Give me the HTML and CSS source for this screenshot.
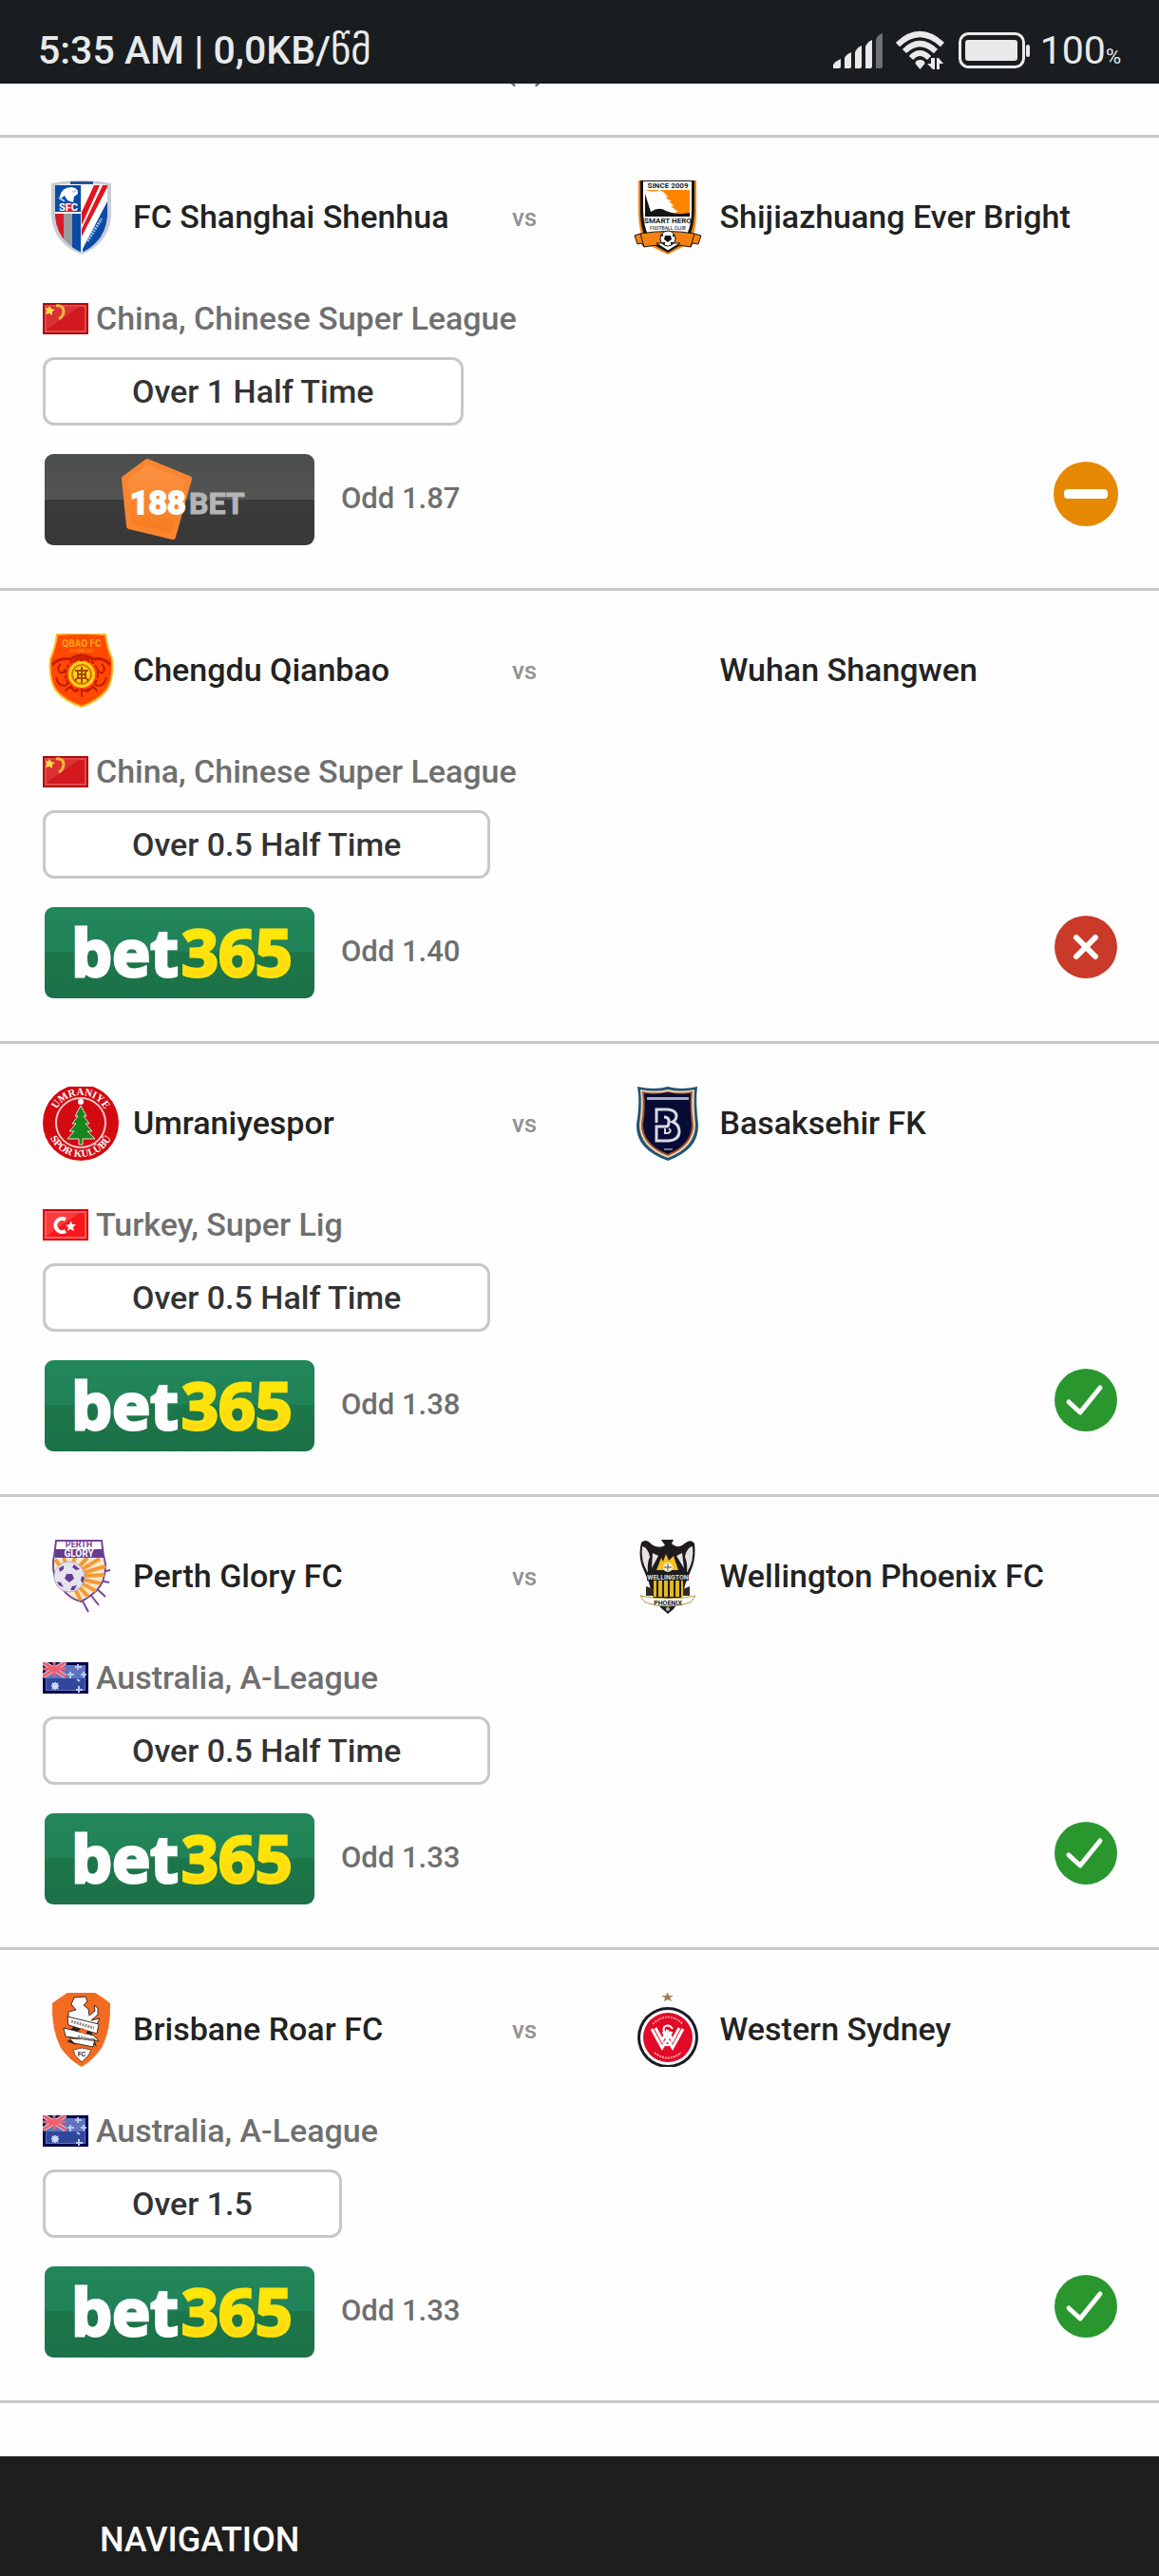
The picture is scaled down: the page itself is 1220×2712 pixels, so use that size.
FILE: index.html
```
<!DOCTYPE html>
<html lang="en">
  <head>
    <meta charset="utf-8">
    <meta name="viewport" content="width=device-width, initial-scale=1">
    <title>Tips</title>
    <link rel="stylesheet" href="styles.css">
  </head>
  <body>

<!-- shared pictures -->
<svg class="sprite" aria-hidden="true">
  <defs>
    <linearGradient id="g-green" x1="0" y1="0" x2="0" y2="1">
      <stop offset="0" stop-color="#22875b"/><stop offset="0.49" stop-color="#218257"/>
      <stop offset="0.49" stop-color="#1c774a"/><stop offset="1" stop-color="#1d7148"/>
    </linearGradient>
    <linearGradient id="g-yellow" x1="0" y1="0" x2="0" y2="1">
      <stop offset="0" stop-color="#fff200"/><stop offset="1" stop-color="#ffd016"/>
    </linearGradient>
    <linearGradient id="g-dark" x1="0" y1="0" x2="0" y2="1">
      <stop offset="0" stop-color="#4c4e4d"/><stop offset="0.5" stop-color="#545454"/>
      <stop offset="0.5" stop-color="#3b3b3b"/><stop offset="1" stop-color="#383838"/>
    </linearGradient>
    <linearGradient id="g-orange" x1="0" y1="0" x2="0" y2="1">
      <stop offset="0" stop-color="#fb9445"/><stop offset="1" stop-color="#f87a1c"/>
    </linearGradient>

    <symbol id="bet365" viewBox="0 0 288 96">
      <rect x="2" width="284" height="96" rx="9" fill="url(#g-green)"/>
      <text class="logo-bet" x="30" y="73" fill="#fff" stroke="#fff">bet</text>
      <text class="logo-bet" x="146" y="73" fill="url(#g-yellow)" stroke="#ffe30c">365</text>
    </symbol>
    <symbol id="bet188" viewBox="0 0 288 96">
      <rect x="2" width="284" height="96" rx="9" fill="url(#g-dark)"/>
      <path d="M86 26L110 8L154 26L137 87L91 76Z" fill="url(#g-orange)" stroke="#fa8530" stroke-width="6" stroke-linejoin="round"/>
      <text class="logo-188" x="92" y="63" fill="#fff" stroke="#fff">188</text>
      <text class="logo-188 logo-188-bet" x="154" y="63" fill="#b5b5b5" stroke="#b5b5b5">BET</text>
    </symbol>

    <symbol id="flag-cn" viewBox="0 0 48 33">
      <rect width="48" height="33" fill="#ad0a0c"/>
      <rect x="2" y="2" width="44" height="29" fill="#e24a4c"/>
      <rect x="4" y="4" width="40" height="25" fill="#d3191d"/>
      <path d="M3 3H40L4 28Z" fill="#e04044" opacity=".6"/>
      <path d="M7 3l2 3 4 1-3 2 0 4-3-2-4 1 1-4-1-3 3 0z" fill="#fbdc4a"/>
      <path d="M14 3q7-1 8 5q0 6-5 9M18 2v2" fill="none" stroke="#eeb838" stroke-width="3"/>
    </symbol>
    <symbol id="flag-tr" viewBox="0 0 48 33">
      <rect width="48" height="33" fill="#dc0003"/>
      <rect x="2" y="2" width="44" height="29" fill="#fd6264"/>
      <rect x="4" y="4" width="40" height="25" fill="#f7181b"/>
      <path d="M3 3H40L4 28Z" fill="#fd5457" opacity=".6"/>
      <path d="M24 11a7 7 0 1 0 0 12" fill="none" stroke="#fff" stroke-width="4"/>
      <path d="M30 12l1 4 4 0-3 3 1 4-4-2-3 2 1-4-3-2 4-1z" fill="#fff"/>
    </symbol>
    <symbol id="flag-au" viewBox="0 0 48 33">
      <rect width="48" height="33" fill="#03044b"/>
      <rect x="3" y="3" width="42" height="27" fill="#5f74bd"/>
      <rect x="4" y="17" width="40" height="12" fill="#31479b"/>
      <path d="M0 0L24 15M24 0L0 15" stroke="#dfc9e0" stroke-width="5"/>
      <path d="M0 0L24 15M24 0L0 15M0 7H24M12 0V15" stroke="#ee5f6b" stroke-width="3"/>
      <path d="M13 21v8M9 25h8M29 10v7M26 13h7M37 2v6M34 5h7M43 10v6M40 13h6M38 25v7M35 29h7M36 18l3 2" stroke="#b9c8f2" stroke-width="2"/>
      <path d="M10 22l6 6M16 22l-6 6" stroke="#cfdcff" stroke-width="2"/>
    </symbol>

    <symbol id="res-win" viewBox="0 0 68 68">
      <circle cx="34" cy="34" r="33" fill="#29972d"/>
      <path d="M16 36L28 47L49 21" fill="none" stroke="#fff" stroke-width="5" stroke-linecap="round" stroke-linejoin="round"/>
    </symbol>
    <symbol id="res-lose" viewBox="0 0 68 68">
      <circle cx="34" cy="34" r="33" fill="#c93a28"/>
      <path d="M24 24L44 44M44 24L24 44" stroke="#fff" stroke-width="6" stroke-linecap="round"/>
    </symbol>
    <symbol id="res-void" viewBox="0 0 68 68">
      <circle cx="34" cy="34" r="34" fill="#e68900"/>
      <rect x="11" y="29" width="46" height="10" rx="4" fill="#fff"/>
    </symbol>
  </defs>
</svg>

<header class="status-bar">
  <div class="status-left">5:35 AM | 0,0KB/წმ</div>
  <div class="status-right">
    <svg class="ic-signal" viewBox="0 0 52 40" aria-label="signal">
      <g fill="#e8eaea">
        <path d="M0 39V35Q3 31 8 29V37Q8 39 6 39Z"/>
        <path d="M12 39V28Q14 24 19 22V37Q19 39 17 39Z"/>
        <path d="M23 39V22Q25 17 30 15V37Q30 39 28 39Z"/>
        <path d="M34 39V16Q36 11 41 9V37Q41 39 39 39Z"/>
      </g>
      <path d="M45 39V9Q46 4 52 2V37Q52 39 50 39Z" fill="#6d7072"/>
    </svg>
    <svg class="ic-wifi" viewBox="0 0 52 42" aria-label="wifi">
      <g fill="none" stroke="#e8eaea" stroke-width="6">
        <path d="M2 15Q25 -7 49 15"/>
        <path d="M9 22Q25 6 42 22"/>
        <path d="M16 29Q25 19 35 29"/>
      </g>
      <path d="M25.500 31q5 0 5 4l-5 6-5-6q0-4 5-4z" fill="#e8eaea"/>
      <path d="M33 35h4v-6h4v12h-2zM43 29h2l5 6h-4v6h-3z" fill="#e8eaea"/>
    </svg>
    <svg class="ic-battery" viewBox="0 0 76 40" aria-label="battery">
      <rect x="1.500" y="2.500" width="67" height="35" rx="9" fill="none" stroke="#e8eaea" stroke-width="3"/>
      <rect x="7" y="9" width="55" height="22" rx="3" fill="#e8eaea"/>
      <rect x="71" y="14" width="4" height="13" rx="2" fill="#e8eaea"/>
    </svg>
    <span class="battery-text">100<small>%</small></span>
  </div>
</header>

<main>
  <!-- heading scrolled under the status bar -->
  <div class="scrolled"><span class="scrolled-count">(5)</span></div>

  <article class="tip">
    <div class="teams">
      <div class="team">
        <svg class="crest" viewBox="0 0 80 78">
          <clipPath id="c-sh"><path d="M13 5Q41 1 68 5V38Q66 64 41 76Q15 64 13 38Z"/></clipPath>
          <path d="M9 3L22 1L41 0L60 1L72 3V38Q70 66 41 78Q11 66 9 38Z" fill="#c9cdd6"/>
          <g clip-path="url(#c-sh)">
            <rect width="80" height="78" fill="#fff"/>
            <rect x="12" y="5" width="28" height="28" fill="#0a4ca5"/>
            <rect x="12" y="35" width="10" height="43" fill="#d51b25"/>
            <rect x="22" y="35" width="9" height="43" fill="#999b9e"/>
            <rect x="31" y="35" width="9" height="43" fill="#0a4ca5"/>
            <path d="M41 33L54 5H60L41 47ZM41 51L63 5H69L41 59Z" fill="#e3141d"/>
            <path d="M69 20V78H42V72Z" fill="#0a4ca5"/>
            <path d="M47 64L62 40" stroke="#9cbce6" stroke-width="3" stroke-dasharray="2 1"/>
            <path d="M18 17Q20 7 30 7Q38 8 37 14L33 17L32 23L26 21L23 16L19 19Z" fill="#fff"/>
            <path d="M17 18L23 22M31 12L35 11" stroke="#b4cef0" stroke-width="2"/>
            <rect x="23" y="24" width="9" height="9" fill="#df1c26"/>
            <rect x="40" y="4" width="1" height="74" fill="#dfe6ef"/>
          </g>
          <rect x="29" y="1" width="24" height="3" fill="#23529e"/>
          <text class="crest-text" x="27" y="32" font-size="11" fill="#fff">SFC</text>
        </svg>
        <span class="team-name">FC Shanghai Shenhua</span>
      </div>
      <span class="vs">vs</span>
      <div class="team">
        <svg class="crest" viewBox="0 0 80 78">
          <path d="M10 0H71V32Q71 61 60 68L41 78L21 68Q10 60 10 32Z" fill="#f58112"/>
          <path d="M12 0H69V32Q68 58 58 66L41 76L23 66Q12 58 12 32Z" fill="#151515"/>
          <path d="M15 1H66V32Q65 56 56 63L41 73L25 63Q16 56 15 32Z" fill="#fff"/>
          <rect x="17" y="10" width="47" height="28" fill="#ff8500"/>
          <path d="M17 10Q27 13 32 10Q38 12 41 18L38 18L45 22L42 22L48 27L44 27L52 33L48 33L54 37H17Z" fill="#fff"/>
          <path d="M17 14L23 33Q32 27 39 32Q50 37 64 34V38H17Z" fill="#151515"/>
          <text class="crest-text" x="41" y="8" font-size="8" fill="#222">SINCE 2009</text>
          <text class="crest-text" x="41" y="45" font-size="8" fill="#222">SMART HERO</text>
          <text class="crest-text" x="41" y="52" font-size="5" fill="#555">FOOTBALL CLUB</text>
          <path d="M6 58L12 56Q41 51 69 56L76 58L73 67L67 66L65 70Q41 65 16 70L13 66L9 67Z" fill="#f58112" stroke="#151515"/>
          <path d="M12 56L16 70M69 56L65 70" stroke="#151515"/>
          <path d="M29 66L41 74L54 66Z" fill="#fff" stroke="#151515"/>
          <circle cx="41" cy="61" r="8" fill="#fff" stroke="#151515"/>
          <path d="M38 58h6l1 4-4 3-4-3zM33 58l3-2v3zM46 56l3 3-3 0zM34 65l4 0 0 3zM44 68l0-3 4 0z" fill="#151515"/>
        </svg>
        <span class="team-name">Shijiazhuang Ever Bright</span>
      </div>
    </div>
    <div class="league"><svg class="flag"><use href="#flag-cn"/></svg>China, Chinese Super League</div>
    <button type="button" class="pick">Over 1 Half Time</button>
    <div class="offer">
      <a href="#" class="bookie" aria-label="188BET"><svg><use href="#bet188"/></svg></a>
      <span class="odd">Odd 1.87</span>
      <svg class="result"><use href="#res-void"/></svg>
    </div>
  </article>

  <article class="tip">
    <div class="teams">
      <div class="team">
        <svg class="crest" viewBox="0 0 80 78">
          <path d="M15 1Q41 -1 66 1Q68 15 73 27Q75 48 67 60Q58 71 41 77Q23 71 14 60Q6 48 8 27Q13 15 15 1Z" fill="#ff4800" stroke="#ffbd26" stroke-width="2"/>
          <path d="M10 33Q17 25 29 27Q41 19 53 27Q65 25 71 33" fill="none" stroke="#c51b00" stroke-width="3"/>
          <g fill="none" stroke="#c51b00" stroke-width="2">
            <path d="M19 32q-5 5-1 9q5 1 5-4M14 46q2 9 9 9q5-2 2-6M24 61q2-6 7-3q3 5 7 1M62 32q5 5 1 9q-5 1-5-4M67 46q-2 9-9 9q-5-2-2-6M57 61q-2-6-7-3q-3 5-7 1M33 30q4-7 8-1q4-6 8 1"/>
            <circle cx="41" cy="43" r="17" stroke-dasharray="4 2"/>
            <path d="M41 58v9"/>
          </g>
          <circle cx="41" cy="43" r="14" fill="#ffd21b"/>
          <circle cx="41" cy="43" r="10" fill="none" stroke="#df7600" stroke-width="2"/>
          <path d="M34 39h14M36 43h10M41 35v17M36 47l-2 3M46 47l2 3M37 39v8h8v-8" fill="none" stroke="#a54600" stroke-width="2"/>
          <text class="crest-text" x="41" y="14" font-size="10" fill="#ffa61c">QBAO FC</text>
          <text class="crest-text" x="41" y="20" font-size="5" fill="#ff8c1a">CHENG DU</text>
        </svg>
        <span class="team-name">Chengdu Qianbao</span>
      </div>
      <span class="vs">vs</span>
      <div class="team">
        <span class="crest"></span>
        <span class="team-name">Wuhan Shangwen</span>
      </div>
    </div>
    <div class="league"><svg class="flag"><use href="#flag-cn"/></svg>China, Chinese Super League</div>
    <button type="button" class="pick">Over 0.5 Half Time</button>
    <div class="offer">
      <a href="#" class="bookie" aria-label="bet365"><svg><use href="#bet365"/></svg></a>
      <span class="odd">Odd 1.40</span>
      <svg class="result"><use href="#res-lose"/></svg>
    </div>
  </article>

  <article class="tip">
    <div class="teams">
      <div class="team">
        <svg class="crest" viewBox="0 0 80 78">
          <circle cx="40" cy="38" r="40" fill="#d20a11"/>
          <circle cx="40" cy="38" r="26" fill="none" stroke="#f3c9ca" stroke-width="2"/>
          <path d="M40 20L34 31H37L31 39H35L28 47H33L26 55H38V61H42V55H55L47 47H52L45 39H49L43 31H46Z" fill="#16861f" stroke="#f0dada"/>
          <circle cx="40" cy="16" r="3" fill="#fff"/>
          <path id="arc-top" d="M11 38A29 29 0 0 1 69 38" fill="none"/>
          <path id="arc-bottom" d="M4 38A36 36 0 0 0 76 38" fill="none"/>
          <text class="crest-serif" font-size="11" fill="#fff"><textPath href="#arc-top" startOffset="50%">UMRANIYE</textPath></text>
          <text class="crest-serif" font-size="11" fill="#fff"><textPath href="#arc-bottom" startOffset="50%">SPOR KULÜBÜ</textPath></text>
        </svg>
        <span class="team-name">Umraniyespor</span>
      </div>
      <span class="vs">vs</span>
      <div class="team">
        <svg class="crest" viewBox="0 0 80 78">
          <path d="M9 0Q27 4 41 0Q55 4 72 0Q70 16 73 40Q74 66 41 78Q7 66 8 40Q12 16 9 0Z" fill="#1d5478"/>
          <path d="M12 3Q28 6 41 3Q54 6 69 3Q68 20 70 40Q70 64 41 75Q11 64 11 40Q14 20 12 3Z" fill="#f1cfae"/>
          <path d="M14 5Q28 8 41 5Q54 8 67 5Q65 20 68 40Q68 62 41 73Q13 62 13 40Q16 20 14 5Z" fill="#a0542d"/>
          <path d="M16 7Q29 9 41 6Q53 9 65 7Q64 20 66 40Q66 61 41 71Q15 61 15 40Q18 20 16 7Z" fill="#070b35"/>
          <rect x="19" y="11" width="44" height="3" fill="#a9adc0"/>
          <path d="M29 38V24H41Q50 25 50 31Q50 35 46 37Q53 40 53 47Q53 56 42 57H29V42H39Q42 42 42 38V35Q41 32 37 32" fill="none" stroke="#d8d9e2" stroke-width="3"/>
          <path d="M38 44V49H41Q46 47 42 44" fill="none" stroke="#d8d9e2" stroke-width="2"/>
          <rect x="37" y="65" width="9" height="2" fill="#767a9b"/>
        </svg>
        <span class="team-name">Basaksehir FK</span>
      </div>
    </div>
    <div class="league"><svg class="flag"><use href="#flag-tr"/></svg>Turkey, Super Lig</div>
    <button type="button" class="pick">Over 0.5 Half Time</button>
    <div class="offer">
      <a href="#" class="bookie" aria-label="bet365"><svg><use href="#bet365"/></svg></a>
      <span class="odd">Odd 1.38</span>
      <svg class="result"><use href="#res-win"/></svg>
    </div>
  </article>

  <article class="tip">
    <div class="teams">
      <div class="team">
        <svg class="crest" viewBox="0 0 80 78">
          <path d="M62 34L71 32M60 43L70 45M55 50L66 60M48 55L59 69M40 61L48 76" stroke="#744795" stroke-width="2"/>
          <path d="M14 1H62Q63 14 66 26Q66 45 56 54Q47 62 40 65Q28 62 20 51Q10 41 11 23Q13 12 14 1Z" fill="#fff" stroke="#744795" stroke-width="2"/>
          <path d="M13 20H64Q66 43 53 54Q44 61 39 63Q27 59 19 48Q11 38 13 20Z" fill="#fbe7c8"/>
          <path d="M28 39L13 21M28 39L22 18M28 39L34 18M28 39L47 19M28 39L60 20M28 39L66 28M28 39L65 37M28 39L61 46M28 39L56 54M28 39L48 60M28 39L40 64" stroke="#f59a35" stroke-width="4"/>
          <rect x="13" y="10" width="51" height="9" fill="#663c8e"/>
          <text class="crest-text" x="38" y="8" font-size="9" fill="#744795">PERTH</text>
          <text class="crest-text" x="38" y="18" font-size="10" fill="#fff">GLORY</text>
          <circle cx="28" cy="39" r="16" fill="#e7e3ee" stroke="#b9aecb"/>
          <path d="M25 36h6l2 5-5 4-5-4zM17 30l5-3 0 4-4 3zM33 26l6 5-4 1-4-3zM41 38l3 2-2 6-2-3zM31 49l5-1-3 5-4 0zM15 44l4 1 3 5-5-2z" fill="#663c8e"/>
        </svg>
        <span class="team-name">Perth Glory FC</span>
      </div>
      <span class="vs">vs</span>
      <div class="team">
        <svg class="crest" viewBox="0 0 80 78">
          <path d="M34 0H47L45 4Q51 11 60 3Q66 -1 69 4Q71 20 65 33L60 45L55 62L47 73L41 78L34 72L26 62L21 45L16 33Q9 18 13 3Q18 -2 24 5Q31 10 38 6Z" fill="#1d1b1c"/>
          <path d="M14 7Q12 22 20 35Q19 25 22 18Q20 8 14 7ZM67 7Q69 22 61 35Q62 25 59 18Q61 8 67 7ZM25 14L24 30L31 17ZM56 14L58 30L50 17Z" fill="#e6e3e1"/>
          <path d="M29 32L34 19L36 23L39 15L42 22L47 17L50 26L52 32Z" fill="#f8bf19"/>
          <circle cx="41" cy="29" r="5" fill="#f5f0df"/>
          <path d="M41 25v8M37 29h8" stroke="#5e5338"/>
          <path d="M26 43H57V60H26Z" fill="#e4b823"/>
          <path d="M30 43V60M36 43V60M42 43V60M48 43V60M54 43V60" stroke="#1d1b1c" stroke-width="2"/>
          <path d="M19 34H63V43H19Z" fill="#1d1b1c"/>
          <path d="M12 59Q26 62 41 62Q56 62 70 59L65 66Q54 70 41 70Q28 70 17 66Z" fill="#fff" stroke="#b59a3b"/>
          <path d="M18 49L26 52V59L18 59ZM64 49L57 52V59L64 59Z" fill="#302b25"/>
          <circle cx="41" cy="73" r="2" fill="#bbb"/>
          <text class="crest-text" x="41" y="42" font-size="7" fill="#ddd">WELLINGTON</text>
          <text class="crest-text" x="41" y="69" font-size="7" fill="#222">PHOENIX</text>
        </svg>
        <span class="team-name">Wellington Phoenix FC</span>
      </div>
    </div>
    <div class="league"><svg class="flag"><use href="#flag-au"/></svg>Australia, A-League</div>
    <button type="button" class="pick">Over 0.5 Half Time</button>
    <div class="offer">
      <a href="#" class="bookie" aria-label="bet365"><svg><use href="#bet365"/></svg></a>
      <span class="odd">Odd 1.33</span>
      <svg class="result"><use href="#res-win"/></svg>
    </div>
  </article>

  <article class="tip">
    <div class="teams">
      <div class="team">
        <svg class="crest" viewBox="0 0 80 78">
          <path d="M26 0H55Q64 5 71 11Q72 39 62 58Q53 71 41 78Q28 71 19 58Q9 39 10 11Q18 5 26 0Z" fill="#f36b21"/>
          <path d="M33 5L45 4L47 9L43 13L48 17L49 24L55 19L54 13L58 16L58 23L51 29L60 27L57 33L27 27V20L35 18L30 12Z" fill="#fff" stroke="#3c2d28"/>
          <path d="M27 27L36 32L27 41L35 55L25 51L44 45L57 57L48 33Z" fill="#252021"/>
          <path d="M26 25L59 33L57 43L27 34ZM22 37L54 45L59 51L24 46ZM28 48L55 49L53 57L33 53Z" fill="#fff" stroke="#3c2d28"/>
          <path d="M30 30L54 37M37 46L52 50" stroke="#8f8a88" stroke-width="3" stroke-dasharray="2 1"/>
          <path d="M37 40l5-3 5 3-2 4z" fill="#f36b21"/>
          <path d="M32 60L41 58L51 60L48 66L41 73L34 66Z" fill="#fff" stroke="#7b4930"/>
          <text class="crest-text" x="41" y="67" font-size="7" fill="#333">FC</text>
        </svg>
        <span class="team-name">Brisbane Roar FC</span>
      </div>
      <span class="vs">vs</span>
      <div class="team">
        <svg class="crest" viewBox="0 0 80 78">
          <path d="M41 -1L42 3H47L43 5L45 9L41 7L37 9L38 5L34 3H39Z" fill="#9b7b4a"/>
          <circle cx="41" cy="47" r="32" fill="#1a1c24"/>
          <circle cx="41" cy="47" r="29" fill="#fff"/>
          <circle cx="41" cy="47" r="26" fill="#e20a26"/>
          <g fill="none" stroke="#fff" stroke-width="3">
            <path d="M24 38L35 58L45 41M28 37L35 50L41 39M57 38L46 58L36 41M53 37L46 50L41 41"/>
            <path d="M46 38Q42 32 37 36Q35 41 41 44Q48 48 44 54Q39 57 36 52" stroke-width="2"/>
          </g>
          <path d="M25 33Q41 18 57 33" fill="none" stroke="#f58b98" stroke-width="2" stroke-dasharray="2 1"/>
          <path d="M27 63Q41 74 55 63" fill="none" stroke="#f8a7b0" stroke-width="2" stroke-dasharray="2 1"/>
        </svg>
        <span class="team-name">Western Sydney</span>
      </div>
    </div>
    <div class="league"><svg class="flag"><use href="#flag-au"/></svg>Australia, A-League</div>
    <button type="button" class="pick">Over 1.5</button>
    <div class="offer">
      <a href="#" class="bookie" aria-label="bet365"><svg><use href="#bet365"/></svg></a>
      <span class="odd">Odd 1.33</span>
      <svg class="result"><use href="#res-win"/></svg>
    </div>
  </article>
</main>

<footer class="footer">
  <h2 class="footer-title">NAVIGATION</h2>
</footer>

  </body>
</html>
```
FILE: styles.css
```
* {
  box-sizing: border-box;
}

body {
  margin: 0;
  background: #fefefe;
  color: #222;
  font-family: Roboto, "Open Sans", sans-serif;
  font-weight: 500;
  font-size: 34px;
}

.sprite {
  position: absolute;
  width: 0;
  height: 0;
}

/* status bar */
.status-bar {
  display: flex;
  justify-content: space-between;
  align-items: center;
  height: 88px;
  padding: 18px 40px 0;
  background: #191d20;
  color: #e8eaea;
  font-size: 41px;
  font-weight: 500;
  white-space: nowrap;
}

.status-left {
  font-family: Roboto, "DejaVu Sans", sans-serif;
}

.status-right {
  display: flex;
  align-items: center;
}

.ic-signal {
  width: 52px;
  height: 40px;
  margin-right: 14px;
}

.ic-wifi {
  width: 52px;
  height: 42px;
  margin-right: 14px;
}

.ic-battery {
  width: 76px;
  height: 40px;
  margin-right: 10px;
}

.battery-text {
  font-weight: 400;
}

.battery-text small {
  font-size: 22px;
}

/* bottom of the previous heading */
.scrolled {
  display: flex;
  justify-content: center;
  height: 57px;
  padding-right: 114px;
  border-bottom: 3px solid #c8c8c8;
  overflow: hidden;
}

.scrolled-count {
  margin-top: -36px;
  color: #6f6f6f;
  line-height: 40px;
}

/* tips */
.tip {
  padding: 45px 43px 45px 45px;
  border-bottom: 3px solid #c8c8c8;
}

.teams {
  display: grid;
  grid-template-columns: 48fr 12fr 50fr;
  align-items: center;
}

.team {
  display: flex;
  align-items: center;
  gap: 15px;
}

.crest {
  flex: none;
  width: 80px;
  height: 78px;
}

.crest-text {
  font-family: Roboto, sans-serif;
  font-weight: 700;
  text-anchor: middle;
}

.crest-serif {
  font-family: "Liberation Serif", serif;
  font-weight: 700;
  text-anchor: middle;
}

.team-name {
  padding-bottom: 2px;
  white-space: nowrap;
}

.vs {
  color: #929292;
  font-size: 26px;
  line-height: 30px;
}

.league {
  display: flex;
  align-items: center;
  gap: 8px;
  height: 40px;
  margin-top: 47px;
  color: #6f6f6f;
}

.flag {
  width: 48px;
  height: 33px;
}

.pick {
  display: block;
  height: 72px;
  margin: 21px 0 30px;
  padding: 0 91px;
  border: 3px solid #c8c8c8;
  border-radius: 12px;
  background: #fff;
  color: #333;
  font: inherit;
}

.offer {
  display: flex;
  align-items: center;
}

.bookie,
.bookie svg {
  display: block;
  width: 288px;
  height: 96px;
}

.logo-bet {
  font-family: "Open Sans", sans-serif;
  font-size: 68px;
  font-weight: 700;
  stroke-width: 3px;
}

.logo-188 {
  font-family: Roboto, sans-serif;
  font-size: 34px;
  font-weight: 700;
  stroke-width: 2px;
}

.logo-188-bet {
  font-size: 32px;
  stroke-width: 1px;
}

.odd {
  padding-bottom: 4px;
  margin-left: 26px;
  color: #6f6f6f;
  font-size: 31px;
}

.result {
  width: 68px;
  height: 68px;
  margin: 0 0 12px auto;
}

/* footer */
.footer {
  margin-top: 56px;
  padding: 60px 105px 9px;
  background: #1e1e1e;
}

.footer-title {
  margin: 0;
  color: #fff;
  font-size: 36px;
  font-weight: 500;
  line-height: 57px;
}
```
